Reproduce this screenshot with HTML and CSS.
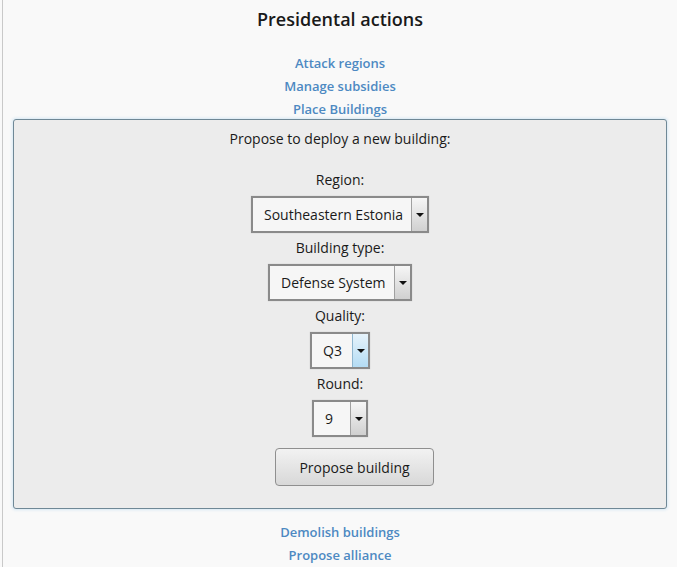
FILE: index.html
```html
<!DOCTYPE html>
<html>
<head>
<meta charset="utf-8">
<link rel="stylesheet" href="styles.css">
</head>
<body>
<div class="page">
  <h1 class="title">Presidental actions</h1>
  <nav class="links">
    <a class="link" href="#">Attack regions</a>
    <a class="link" href="#">Manage subsidies</a>
    <a class="link" href="#">Place Buildings</a>
  </nav>
  <section class="panel">
    <div class="intro">Propose to deploy a new building:</div>
    <div class="field first">
      <div class="label">Region:</div>
      <div class="select w-region"><span class="val">Southeastern Estonia</span><span class="arrow"></span></div>
    </div>
    <div class="field">
      <div class="label">Building type:</div>
      <div class="select w-type"><span class="val">Defense System</span><span class="arrow"></span></div>
    </div>
    <div class="field">
      <div class="label">Quality:</div>
      <div class="select w-quality"><span class="val">Q3</span><span class="arrow hot"></span></div>
    </div>
    <div class="field">
      <div class="label">Round:</div>
      <div class="select w-round"><span class="val">9</span><span class="arrow"></span></div>
    </div>
    <button class="btn">Propose building</button>
  </section>
  <nav class="links after">
    <a class="link" href="#">Demolish buildings</a>
    <a class="link" href="#">Propose alliance</a>
  </nav>
</div>
</body>
</html>
```
FILE: styles.css
```css
html, body {
  margin: 0;
  padding: 0;
  background: #f9f9f9;
  font-family: "Open Sans", "Noto Sans", sans-serif;
  color: #1a1a1a;
  overflow: hidden;
}
.page {
  margin-left: 2px;
  border-left: 1px solid #c9c9c9;
  padding: 0 10px;
  height: 567px;
  box-sizing: border-box;
  display: flex;
  flex-direction: column;
  align-items: stretch;
}
.title {
  margin: 7px 0 0;
  font-size: 18px;
  line-height: 24px;
  font-weight: 600;
  text-align: center;
  color: #1a1a1a;
}
.links {
  display: flex;
  flex-direction: column;
  align-items: center;
  margin-top: 21px;
}
.links.after {
  margin-top: 12px;
}
.link {
  display: block;
  font-size: 13px;
  line-height: 23px;
  font-weight: 600;
  color: #4d89c2;
  text-decoration: none;
}
.panel {
  margin-top: -2px;
  border: 1px solid #6f8896;
  border-radius: 3px;
  background: #ececec;
  box-shadow: 0 0 3px 1px #d6e8f4;
  display: flex;
  flex-direction: column;
  align-items: center;
  padding: 9px 0 22px;
}
.intro {
  font-size: 14px;
  line-height: 20px;
}
.field {
  display: flex;
  flex-direction: column;
  align-items: center;
  margin-top: 5px;
}
.field.first {
  margin-top: 21px;
}
.label {
  font-size: 14px;
  line-height: 20px;
  margin-bottom: 6px;
}
.select {
  display: flex;
  height: 37px;
  box-sizing: border-box;
  border: 2px solid #8a8a8a;
  background: #f6f6f6;
  box-shadow: 0 0 1px #bbb;
}
.val {
  flex: 1;
  font-size: 14px;
  line-height: 33px;
  padding-left: 11px;
  white-space: nowrap;
}
.arrow {
  width: 15px;
  border-left: 1px solid #a0a0a0;
  background: linear-gradient(#f6f6f6, #d0d0d0);
  display: flex;
  align-items: center;
  justify-content: center;
}
.arrow::after {
  content: "";
  border-left: 4px solid transparent;
  border-right: 4px solid transparent;
  border-top: 4px solid #111;
}
.arrow.hot {
  background: linear-gradient(#e6f3fb, #b4dcf4);
  border-left-color: #8fb6cf;
}
.w-region { width: 178px; }
.w-type { width: 144px; }
.w-quality { width: 60px; }
.w-round { width: 56px; }
.btn {
  margin-top: 11px;
  width: 159px;
  height: 38px;
  border: 1px solid #8f8f8f;
  border-radius: 4px;
  background: linear-gradient(#f2f2f2, #d8d8d8);
  font-family: "Open Sans", "Noto Sans", sans-serif;
  font-size: 14px;
  color: #1a1a1a;
  padding: 0;
  margin-left: 29px;
}
```
